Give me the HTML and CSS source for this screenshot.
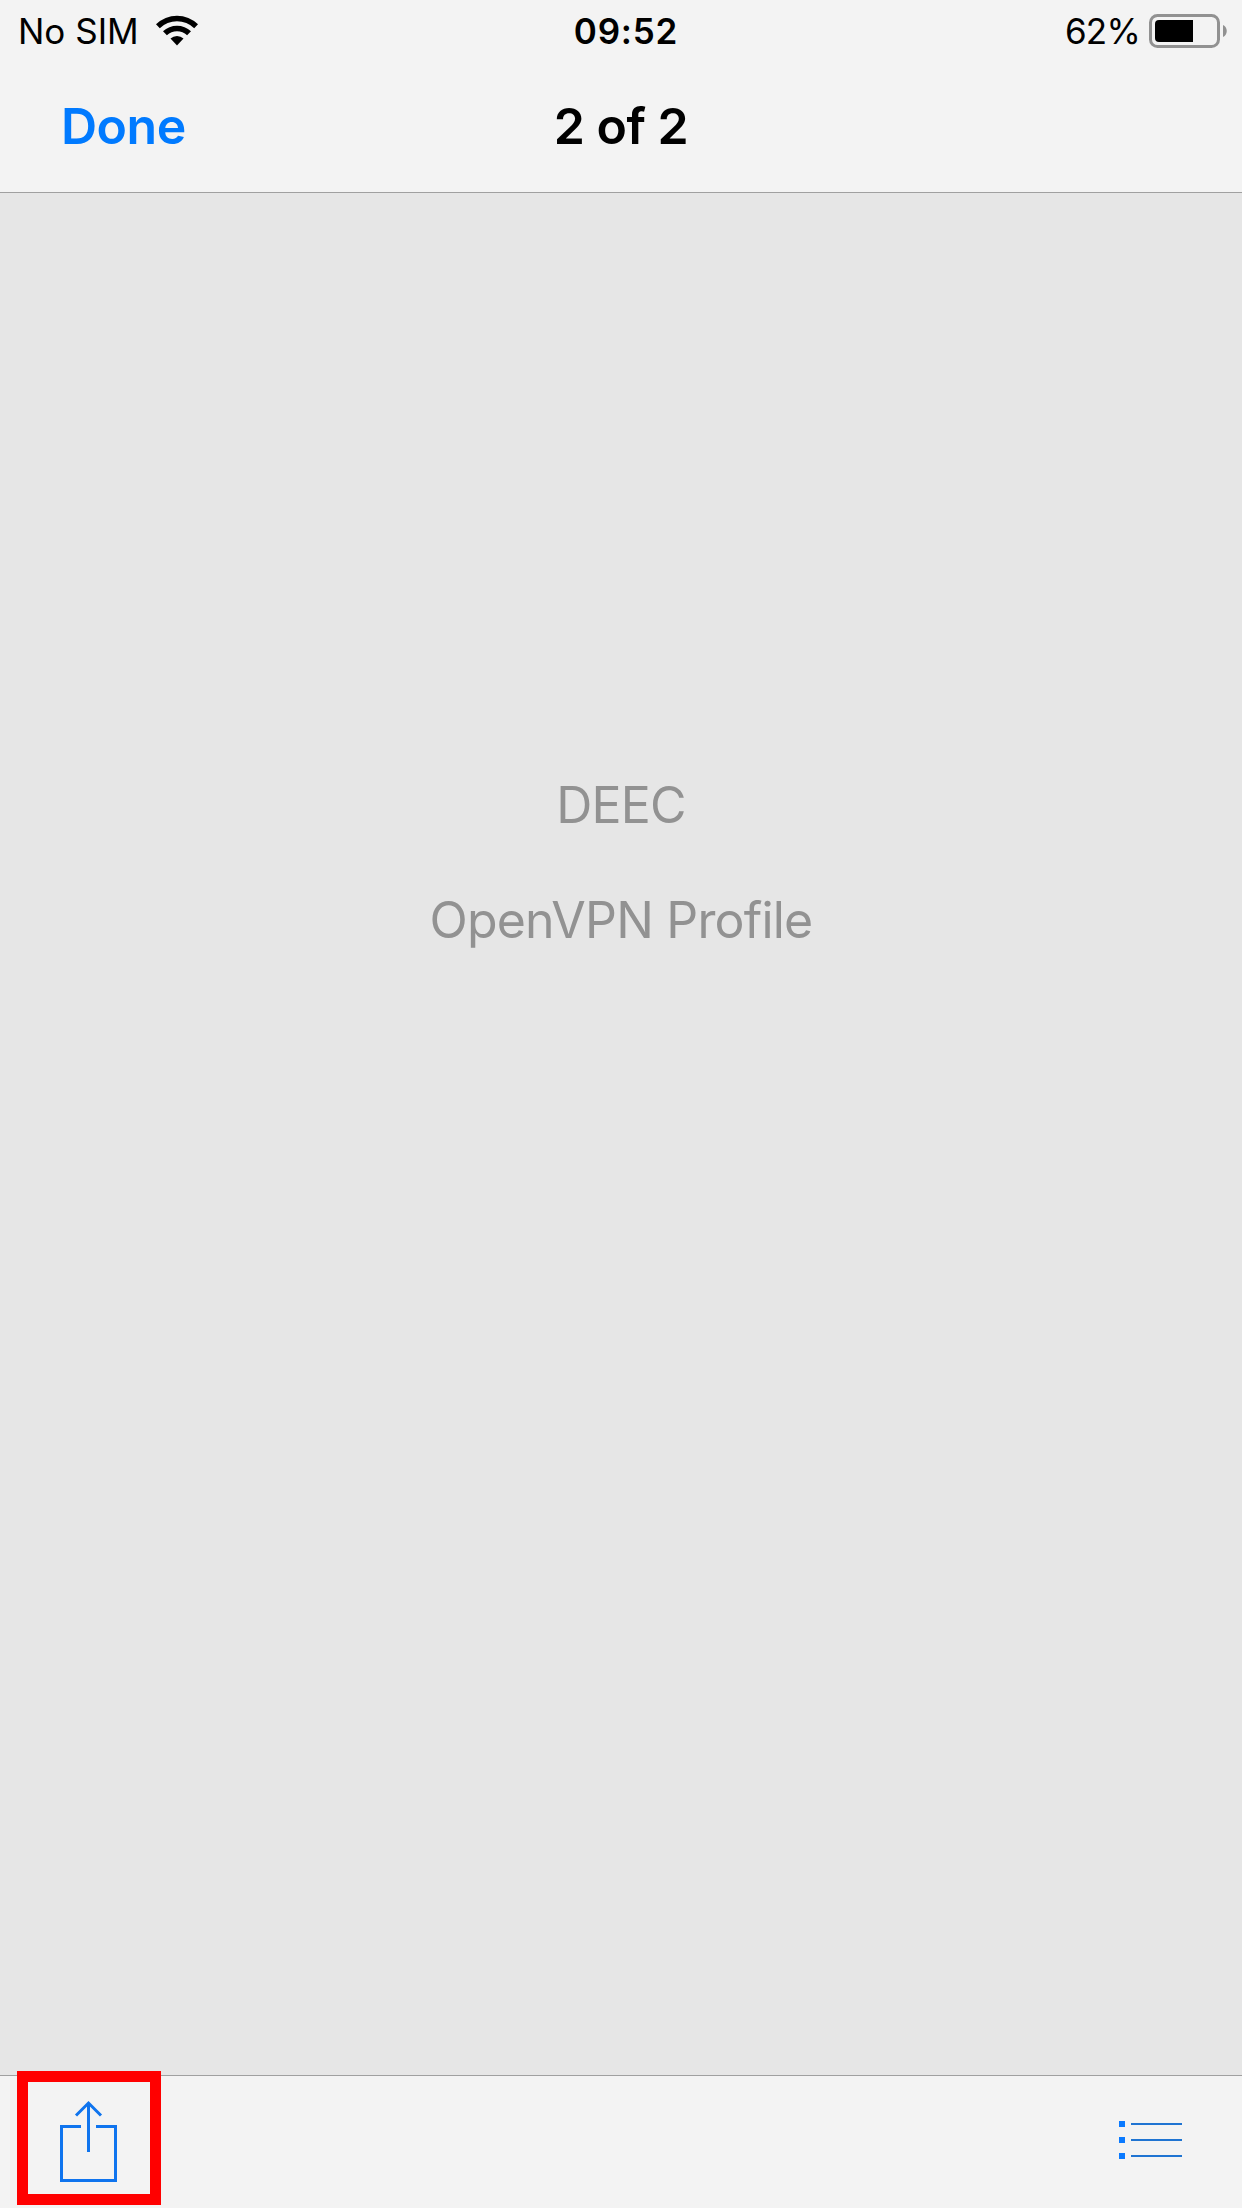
FILE: index.html
```html
<!DOCTYPE html>
<html lang="en">
<head>
<meta charset="utf-8" />
<title>2 of 2</title>
<meta name="viewport" content="width=device-width, initial-scale=1.0" />
<link rel="stylesheet" href="styles.css">
</head>
<body>
<header>
  <div class="status">
    <div class="carrier">
      <span class="sim">No SIM</span>
      <svg class="wifi" width="42" height="31" viewBox="0 0 42 31">
        <path d="M0 9.300a30 30 0 0 1 42 0l-3.800 4a24.600 24.600 0 0 0-34.400 0z"/>
        <path d="M7 16.300a20.300 20.300 0 0 1 28 0l-3.900 4a14.600 14.600 0 0 0-20.200 0z"/>
        <path d="M14.500 23.600a9.500 9.500 0 0 1 13 0l-6.500 6.900z"/>
      </svg>
    </div>
    <div class="time">09:52</div>
    <div class="power">
      <span class="percent">62%</span>
      <svg width="80" height="34" viewBox="0 0 80 34">
        <rect x="1.500" y="1.500" width="68" height="31" rx="7" fill="none" stroke="#919191" stroke-width="3"/>
        <path d="M44 6v22H10a4 4 0 0 1-4-4V10a4 4 0 0 1 4-4z"/>
        <path d="M74 11c5 2 5 10 0 12z" fill="#919191"/>
      </svg>
    </div>
  </div>
  <nav>
    <a class="done">Done</a>
    <h1>2 of 2</h1>
  </nav>
</header>

<main>
  <p class="name">DEEC</p>
  <p class="kind">OpenVPN Profile</p>
</main>

<footer>
  <a class="share">
    <svg width="58" height="83" viewBox="0 0 58 83">
      <path d="M21 26.500H1.500v54h54v-54H36M28.500 52V3M16 15.500L28.500 3 41 15.500"/>
    </svg>
  </a>
  <a class="list">
    <svg width="63" height="38" viewBox="0 0 63 38">
      <path d="M0 0h6v6H0zM0 16h6v6H0zM0 32h6v6H0z"/>
      <path d="M12 2h51v2H12zM12 18h51v2H12zM12 34h51v2H12z"/>
    </svg>
  </a>
</footer>
</body>
</html>
```
FILE: styles.css
```css
body {
  display:flex;
  flex-direction:column;
  height:2208px;
  margin:0;
  font-family:Inter, 'Liberation Sans', sans-serif;
  font-size:50px;
  background:#e6e6e6;
  color:#000;
}
h1, p {
  margin:0;
}
svg {
  display:block;
}
header {
  box-sizing:border-box;
  height:193px;
  background:#f3f3f3;
  border-bottom:1px solid #a0a0a0;
}
.status {
  display:grid;
  grid-template-columns:1fr auto 1fr;
  align-items:center;
  height:60px;
  padding:0 13px 0 18px;
  font-size:35px;
  line-height:62px;
}
.carrier, .power {
  display:flex;
  align-items:center;
}
.carrier {
  gap:17px;
}
.wifi {
  margin-bottom:2px;
}
.power {
  justify-content:flex-end;
  gap:9px;
}
.percent {
  letter-spacing:-.8px;
}
.time {
  padding-left:5px;
  font-weight:600;
  letter-spacing:.8px;
}
nav {
  display:grid;
  grid-template-columns:1fr auto 1fr;
  align-items:center;
  height:132px;
  padding:0 61px;
}
h1, .done {
  font-size:50px;
  font-weight:600;
  letter-spacing:-.5px;
}
.done {
  color:#007aff;
}
main {
  flex:1;
  padding-top:555px;
  text-align:center;
  line-height:115px;
  letter-spacing:-.8px;
  color:#929292;
}
footer {
  box-sizing:border-box;
  display:flex;
  justify-content:space-between;
  height:133px;
  padding:0 60px 0 17px;
  background:#f3f3f3;
  border-top:1px solid #a0a0a0;
}
/* the highlight frame overlaps the toolbar's top edge */
.share {
  box-sizing:border-box;
  width:144px;
  height:134px;
  margin-top:-5px;
  padding:18px 0 0 32px;
  border:11px solid #f00;
}
.share path {
  fill:none;
  stroke:#0f74ee;
  stroke-width:3;
}
.list {
  padding-top:45px;
}
.list path {
  fill:#0a7aff;
}
.list path + path {
  fill:#1f74d2;
}
```
